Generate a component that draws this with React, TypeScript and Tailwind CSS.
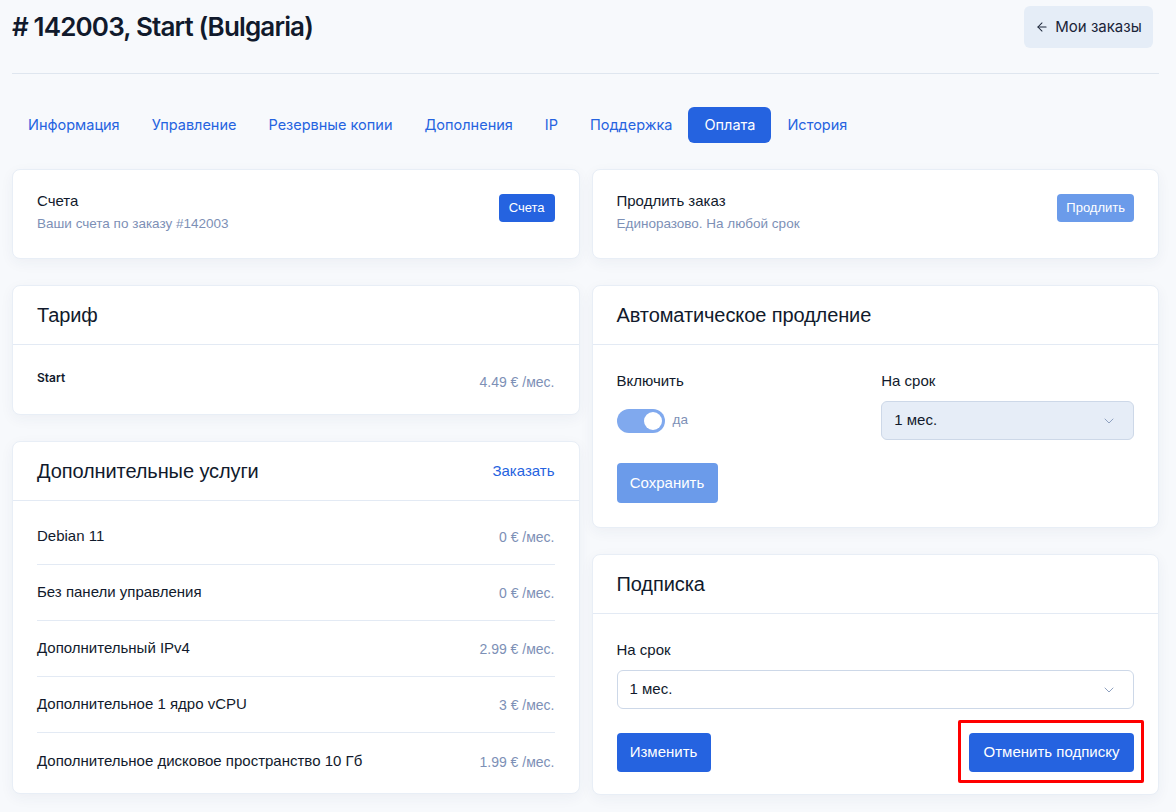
import { ArrowLeft, ChevronDown } from 'lucide-react';

const tabs = ['Информация', 'Управление', 'Резервные копии', 'Дополнения', 'IP', 'Поддержка', 'Оплата', 'История'];

const services = [
  { name: 'Debian 11', price: '0 € /мес.' },
  { name: 'Без панели управления', price: '0 € /мес.' },
  { name: 'Дополнительный IPv4', price: '2.99 € /мес.' },
  { name: 'Дополнительное 1 ядро vCPU', price: '3 € /мес.' },
  { name: 'Дополнительное дисковое пространство 10 Гб', price: '1.99 € /мес.' },
];

function Card({ children }: { children: React.ReactNode }) {
  return (
    <div className="bg-white rounded-lg border border-[#e8eef6] shadow-[0_4px_14px_rgba(30,50,90,0.05)]">
      {children}
    </div>
  );
}

function CardHeader({ title, action }: { title: string; action?: React.ReactNode }) {
  return (
    <div className="h-[59px] px-6 flex items-center justify-between border-b border-[#e3eaf4]">
      <span className="text-[20px] text-[#111a2c] tracking-[-0.1px]">{title}</span>
      {action}
    </div>
  );
}

function Select({ disabled }: { disabled?: boolean }) {
  return (
    <div
      className={
        'h-[39px] rounded-md border border-[#cdd8e8] flex items-center justify-between pl-3 pr-4 text-[15px] text-[#111a2c] ' +
        (disabled ? 'bg-[#e6edf7]' : 'bg-white')
      }
    >
      <span>1 мес.</span>
      <ChevronDown className="w-4 h-4 text-[#8fa1c0]" strokeWidth={1.5} />
    </div>
  );
}

export default function App() {
  return (
    <div className="min-h-screen bg-[#f7f9fc] pl-3 pr-[17px] pb-5 font-['Liberation_Sans',Arial,sans-serif] text-[#111a2c]">
      <div className="flex items-start justify-between pt-[6px]">
        <h1 className="font-['Inter',sans-serif] text-[26px] font-semibold leading-[42px] tracking-[-0.85px] text-[#111a2c]">
          # 142003, Start (Bulgaria)
        </h1>
        <button className="h-[42px] w-[129px] mr-[6px] rounded-md bg-[#e5edf7] flex items-center justify-center gap-1.5 font-['Inter',sans-serif] text-[15px] text-[#1a2438]">
          <ArrowLeft className="w-3.5 h-3.5" strokeWidth={1.75} />
          Мои заказы
        </button>
      </div>
      <div className="mt-[25px] border-t border-[#dfe6ef]" />

      <nav className="mt-[33px] flex font-['Inter',sans-serif] text-[14.5px]">
        {tabs.map((t) => (
          <span
            key={t}
            className={
              'h-9 px-4 flex items-center rounded-md ' +
              (t === 'Оплата' ? 'bg-[#2563e0] text-white' : 'text-[#2563e0]')
            }
          >
            {t}
          </span>
        ))}
      </nav>

      <div className="mt-[26px] grid grid-cols-2 gap-3">
        <div className="flex flex-col gap-[26px]">
          <Card>
            <div className="h-[88px] px-6 pt-[21px] flex items-start justify-between">
              <div>
                <div className="text-[15px] leading-5">Счета</div>
                <div className="mt-[3px] text-[13.5px] text-[#7d90b6]">Ваши счета по заказу #142003</div>
              </div>
              <button className="mt-[3px] h-7 px-[10px] rounded bg-[#2563e0] text-white text-[13px]">Счета</button>
            </div>
          </Card>

          <Card>
            <CardHeader title="Тариф" />
            <div className="h-[69px] px-6 pt-6 flex justify-between">
              <span className="font-['Inter',sans-serif] text-[12px] font-semibold">Start</span>
              <span className="text-[14px] text-[#7d90b6] mt-[3px]">4.49 € /мес.</span>
            </div>
          </Card>

          <Card>
            <CardHeader title="Дополнительные услуги" action={<span className="text-[15px] text-[#2563e0]">Заказать</span>} />
            <div className="px-6 pt-2 pb-[4px]">
              {services.map((s, i) => (
                <div
                  key={s.name}
                  className={'h-14 flex items-center justify-between ' + (i < services.length - 1 ? 'border-b border-[#e3eaf4]' : '')}
                >
                  <span className="text-[15px]">{s.name}</span>
                  <span className="text-[14px] text-[#7d90b6] mt-[2px]">{s.price}</span>
                </div>
              ))}
            </div>
          </Card>
        </div>

        <div className="flex flex-col gap-[26px]">
          <Card>
            <div className="h-[88px] px-6 pt-[21px] flex items-start justify-between">
              <div>
                <div className="text-[15px] leading-5">Продлить заказ</div>
                <div className="mt-[3px] text-[13.5px] text-[#7d90b6]">Единоразово. На любой срок</div>
              </div>
              <button className="mt-[3px] h-7 px-[9px] rounded bg-[#6b9bea] text-white text-[13px]">Продлить</button>
            </div>
          </Card>

          <Card>
            <CardHeader title="Автоматическое продление" />
            <div className="px-6 pt-[26px] pb-[24px]">
              <div className="grid grid-cols-2 gap-3">
                <div>
                  <div className="text-[15px] leading-5 mb-2.5">Включить</div>
                  <div className="h-[39px] flex items-center gap-2">
                    <div className="w-12 h-6 rounded-full bg-[#80a9ee] flex items-center justify-end px-[3px]">
                      <div className="w-[18px] h-[18px] rounded-full bg-white" />
                    </div>
                    <span className="text-[13.5px] text-[#7d90b6]">да</span>
                  </div>
                </div>
                <div>
                  <div className="text-[15px] leading-5 mb-2.5">На срок</div>
                  <Select disabled />
                </div>
              </div>
              <button className="mt-[23px] h-10 w-[101px] rounded bg-[#6b9bea] text-white text-[15px]">Сохранить</button>
            </div>
          </Card>

          <Card>
            <CardHeader title="Подписка" />
            <div className="px-6 pt-[26px] pb-[22px]">
              <div className="text-[15px] leading-5 mb-2.5">На срок</div>
              <Select />
              <div className="mt-6 flex justify-between">
                <button className="h-[39px] w-[94px] rounded bg-[#2563e0] text-white text-[15px]">Изменить</button>
                <div className="relative">
                  <button className="h-[39px] w-[165px] rounded bg-[#2563e0] text-white text-[15px]">Отменить подписку</button>
                  <div className="absolute -left-[11px] -right-[10px] -top-[13px] -bottom-[11px] border-[3px] border-[#ff0000] rounded-[2px] pointer-events-none" />
                </div>
              </div>
            </div>
          </Card>
        </div>
      </div>
    </div>
  );
}
